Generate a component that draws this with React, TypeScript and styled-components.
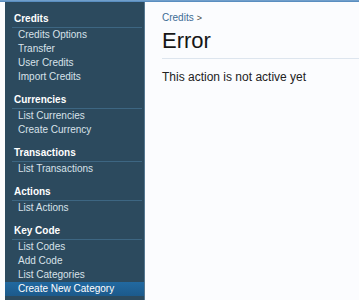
import React, { FC } from 'react';
import styled, { createGlobalStyle } from 'styled-components';

type Group = {
  title: string;
  items: string[];
};

const groups: Group[] = [
  { title: 'Credits', items: ['Credits Options', 'Transfer', 'User Credits', 'Import Credits'] },
  { title: 'Currencies', items: ['List Currencies', 'Create Currency'] },
  { title: 'Transactions', items: ['List Transactions'] },
  { title: 'Actions', items: ['List Actions'] },
  { title: 'Key Code', items: ['List Codes', 'Add Code', 'List Categories', 'Create New Category'] },
];

const activeItem = 'Create New Category';

const App: FC = (): JSX.Element => {
  return (
    <>
      <GlobalStyle />
      <TopStrip />
      <PageWrapper>
        <Sidebar>
          {groups.map((group) => (
            <NavGroup key={group.title}>
              <NavHeader>{group.title}</NavHeader>
              {group.items.map((item) => (
                <NavItem key={item} active={item === activeItem}>
                  {item}
                </NavItem>
              ))}
            </NavGroup>
          ))}
        </Sidebar>
        <Content>
          <Breadcrumb>
            <CrumbLink>Credits</CrumbLink>
            <CrumbArrow>&gt;</CrumbArrow>
          </Breadcrumb>
          <Title>Error</Title>
          <Message>This action is not active yet</Message>
        </Content>
      </PageWrapper>
    </>
  );
};

interface ActiveProp {
  active: boolean;
}

const GlobalStyle = createGlobalStyle`
  html, body {
    margin: 0;
    padding: 0;
    background: #fbfcfe;
    font-family: "Liberation Sans", Arial, sans-serif;
  }
`;

const TopStrip = styled.div`
  height: 2px;
  background: linear-gradient(#7aa6cf, #4f86bb);
`;

const PageWrapper = styled.div`
  display: flex;
  padding-left: 5px;
  background: #fbfcfe;
`;

const Sidebar = styled.nav`
  width: 139px;
  min-height: 293px;
  padding-top: 10px;
  background: #2c4a5e;
  border-right: 1px solid #557790;
  box-sizing: content-box;
`;

const NavGroup = styled.div`
  display: flex;
  flex-direction: column;
  margin-bottom: 9px;
`;

const NavHeader = styled.div`
  margin: 0 2px 0 7px;
  padding: 0 0 1px 2px;
  line-height: 14px;
  font-size: 10px;
  font-weight: bold;
  color: #ffffff;
  border-bottom: 1px solid #3d6682;
`;

const NavItem = styled.div<ActiveProp>`
  padding-left: 13px;
  line-height: 14px;
  font-size: 10px;
  color: ${({ active }) => (active ? '#ffffff' : '#d8e2ea')};
  background: ${({ active }) => (active ? 'linear-gradient(#2269a0, #1c5a8b)' : 'transparent')};
`;

const Content = styled.main`
  flex: 1;
  padding: 9px 0 0 17px;
`;

const Breadcrumb = styled.div`
  display: flex;
  gap: 3px;
  line-height: 14px;
  font-size: 10px;
`;

const CrumbLink = styled.span`
  color: #3d6c94;
`;

const CrumbArrow = styled.span`
  color: #444;
  font-size: 9px;
`;

const Title = styled.h1`
  margin: 3px 0 0;
  padding-bottom: 4px;
  font-size: 22px;
  line-height: 26px;
  font-weight: normal;
  color: #161616;
  border-bottom: 1px solid #dde5ee;
`;

const Message = styled.p`
  margin: 10px 0 0;
  font-size: 12px;
  line-height: 16px;
  color: #222;
`;

export default App;
